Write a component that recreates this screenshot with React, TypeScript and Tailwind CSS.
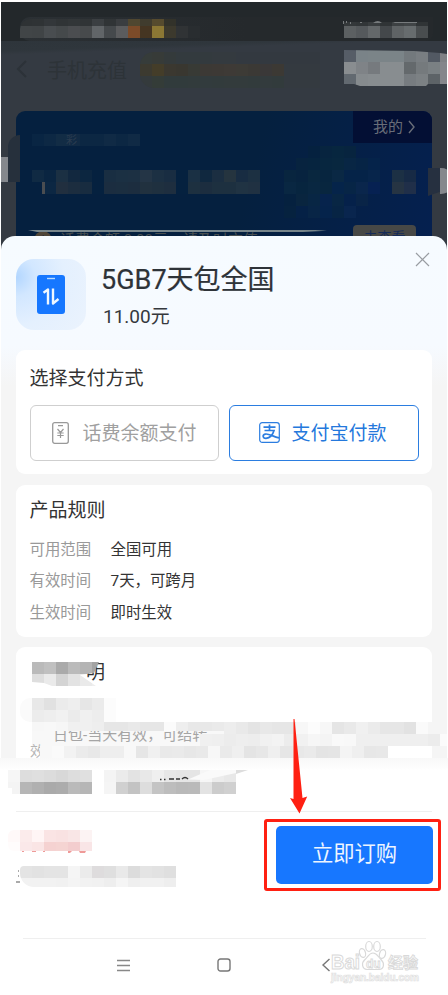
import React from "react";

type MosaicProps = { className?: string; rows: string[][] };

/** Grid of 12px privacy blocks. */
function Mosaic({ className = "", rows }: MosaicProps) {
  return (
    <div className={"flex shrink-0 flex-col overflow-hidden " + className} aria-hidden="true">
      {rows.map((row, i) => (
        <div key={i} className="flex shrink-0">
          {row.map((c, j) => (
            <span key={j} className="h-3 w-3 shrink-0" style={{ backgroundColor: c ? "#" + c : "transparent" }} />
          ))}
        </div>
      ))}
    </div>
  );
}

const r = (s: string) => s.split(" ").map((c) => (c === "-" ? "" : c));

function StatusBar() {
  return (
    <div className="relative h-[39px] shrink-0 bg-[#23282b] pt-[15px]">
      <div className="ml-[19px] flex h-6 w-[413px] items-start justify-between rounded-bl-[10px] rounded-br-[8px] rounded-tl-[10px] bg-[linear-gradient(90deg,#2b3034_0%,#25292c_55%,#25292c_100%)] pr-[5px]">
        <Mosaic
          className="-mt-[3px] w-[180px] [clip-path:inset(5px_0_0_0_round_10px_0_0_0)]"
          rows={[
            r("2e3234 2f3335 33373a 303436 323638 303436 3b3f42 303436 3a3d40 504730 403c2e 564b2e 32322a - -"),
            r("414547 404446 494d50 45494b 4b4d50 474a4c 616568 45494c 5b5c5e 7c4b29 453522 8b7734 3c392d 303335 292d30"),
          ]}
        />
        <div className="-mt-[3px]">
          <Mosaic
            className="[clip-path:inset(8px_0_0_0)]"
            rows={[
              r("34383a 323638 393d3f 303436 3d4143 414547 303436"),
              r("5c6062 55595c 64686a 44484b 5f6365 676c6e 494d4f"),
            ]}
          />
        </div>
      </div>
      <svg className="absolute left-[339px] top-[18px]" width="80" height="5" viewBox="0 0 80 5" fill="#777b7d">
        <path d="M3 1h1v3H3zM6 1h1v2H6zM10 2h1v2h-1zM20 2h2v1h-2zM33 3q5-4 9 0zM55 2h22v1H53z" />
      </svg>
    </div>
  );
}

function TitleBar() {
  return (
    <div className="flex h-[70px] shrink-0 items-start bg-[linear-gradient(178deg,#2e353b_0px,#2f363c_10px,#343a42_14px)] pl-[15px]">
      <svg className="mt-[18px] shrink-0" width="12" height="20" viewBox="0 0 12 20" fill="none" stroke="#2c3238" strokeWidth="2">
        <path d="M10 2L2 10l8 8" />
      </svg>
      <span className="ml-[19px] mt-[15px] w-[93px] shrink-0 whitespace-nowrap text-[20px] leading-[30px] text-[#2d3338]">手机充值</span>
      <Mosaic
        className="mt-[11px] w-[180px] rounded-l-[14px]"
        rows={[
          r("363c3a 373b38 343a3b 333a3e 333a3e 333a3e 343a3f 343a3f 333940 333940 333940 333940 333940 333940 333940"),
          r("3c3a30 443d29 3b3830 393730 383a35 3c3935 3d3935 3e3a36 3d3b36 3b3935 3a3838 3c3934 343a40 343a40 343a40"),
          r("343a3c 343c38 313b3c 313b3c 323b3c 323b3d 323b3c 333b3c 333b3c 323b3c 333b3d 323b3c 343a40 343a40 343a40"),
        ]}
      />
      <Mosaic
        className="ml-[24px] mt-[9px] w-[103px] [clip-path:polygon(0_0,70px_1px,96px_3px,104px_4px,104px_34px,84px_34px,82px_36px,16px_36px,10px_34px,0_34px)]"
        rows={[
          r("565d67 7a8388 7b8488 7b8488 7b8488 73797d 797e82 525963 7f8185"),
          r("898d90 7f8387 767a7e 888d90 888d90 64696c 757a7d 7a8083 85868b"),
          r("626970 868b8e 888d90 888d90 888d90 777c80 7c8184 5d6367 85868b"),
        ]}
      />
    </div>
  );
}

function AccountCard() {
  return (
    <div className="relative mx-[15px] flex h-[160px] shrink-0 flex-col overflow-hidden rounded-t-[9px] bg-[linear-gradient(105deg,#05203f_55%,#052050_100%)]">
      <div className="flex h-[59px] items-start justify-between pl-4">
        <Mosaic
          className="mt-[23px]"
          rows={[r("092543 0d2844 122c45 112a44 0c2743 0c2743 102a45 0c2743 102a45")]}
        />
        <div className="flex h-8 w-[79px] items-center bg-[#030f34] pl-5 text-[15px] text-[#686d78]">
          <span className="pt-px">我的</span>
          <svg className="ml-1" width="9" height="14" viewBox="0 0 9 14" fill="none" stroke="#686d78" strokeWidth="1.4">
            <path d="M2 1l5 6-5 6" />
          </svg>
        </div>
      </div>
      <div className="flex h-[59px] items-start justify-between pl-4 pr-4">
        <Mosaic
          rows={[
            r("102a43 0a2541 1b3043 12283f 0c2640 05213f 192e42 1b3043 1c3043 243546 1c3043 192d42 05213f 1a3044 10283f 1b2e41 25343f 182c42 1c3042"),
            r("- 0c2743 212f3f 1c2d3f 182c40 05213f 1b2d40 1b2e40 1c2d3f 21313f 1f303f 1e2e3f 05213f 1d3040 1c2d3f 1d3040 1d3040 203343 203142"),
          ]}
        />
        <Mosaic rows={[r("1c3044 172a45"), r("263443 202f49")]} />
      </div>
      <div className="flex items-start justify-between pl-[18px] pr-4 text-[15px] leading-[22px] text-[#484f50]">
        <div className="flex items-center">
          <span className="mr-2 flex h-[18px] w-[18px] items-center justify-center rounded-full bg-[#504638] text-[12px] text-[#222e3c]">!</span>
          话费余额 0.00元，请及时充值
        </div>
        <div className="-mt-1 h-6 w-[63px] rounded-[4px] bg-[#474846] pt-px text-center text-[14px] text-[#152b58]">去查看</div>
      </div>
      <Mosaic
        className="absolute left-[268px] top-[35px]"
        rows={[
          r("- - 05213f 07243f 07263f 07243f - -"),
          r("- 07233f 06243f 07263f 08273f 082644 062445 05234a"),
          r("08253f 07233f 09273f 07253f 0a2844 052348 052348 07254b"),
          r("092742 07253f 092741 08263f 05244a 072546 0a264c 062152"),
          r("05213f 09253f 082644 06234c 082644 05214a 092447 -"),
          r("06223f 052146 082546 05234b 072444 09254e - -"),
        ]}
      />
      <span className="absolute left-[50px] top-[24px] text-[11px] leading-[12px] text-[#2b3c50]">彩</span>
      <div className="absolute left-[26px] top-[71px] h-3 w-[3px] bg-[#4a4d51]" />
    </div>
  );
}

function Backdrop() {
  return (
    <div className="relative ml-px mt-0.5 flex h-[260px] w-[446px] shrink-0 flex-col overflow-hidden bg-[#343a42]">
      <StatusBar />
      <TitleBar />
      <AccountCard />
      <div className="absolute left-[7px] top-[133px] h-[47px] w-3 rounded-tl-full bg-[#26303c]" />
      <div className="absolute left-0 top-[155px] h-[25px] w-[7px] bg-[#85888d]" />
      <div className="absolute left-[427px] top-[166px] h-[28px] w-3 bg-[#263040] [clip-path:polygon(0_0,100%_0,100%_85%,0_100%)]" />
      <div className="absolute left-[439px] top-[166px] h-[26px] w-[14px] rounded-r-full bg-[#85888d]" />
      <div className="absolute left-[27px] top-[228px] h-[2px] w-[299px] bg-[#77858a] [clip-path:polygon(0_0,96%_0,100%_40%,92%_100%,3%_100%)]" />
    </div>
  );
}

function PlanHeader() {
  return (
    <div className="flex h-[114px] shrink-0 items-start pl-[15px] pr-[17px] pt-[23px]">
      <div className="flex h-[71px] w-[70px] items-center justify-center rounded-[18px] bg-[radial-gradient(circle_at_0%_25%,#b2d6ff_0%,#d2e7ff_22%,#e4f0fe_55%,#ebf3fd_100%)]">
        <svg width="28" height="39" viewBox="0 0 28 39">
          <rect width="28" height="39" rx="3" fill="#1677ff" />
          <path d="M10 3.500h8" stroke="#b9dbff" strokeWidth="1.400" />
          <path d="M6.500 17.800l4.500-3.300v15M16 13.500v15l5.500-4.500" fill="none" stroke="#eef7ff" strokeWidth="2.400" strokeLinejoin="round" />
        </svg>
      </div>
      <div className="flex flex-1 flex-col pl-[15px]">
        <h1 className="h-10 whitespace-nowrap pt-px text-[27px] leading-[40px] text-[#2e3338] [-webkit-text-stroke:0.2px_#2e3338]">5GB7天包全国</h1>
        <p className="pl-[2px] text-[19px] leading-[35px] text-[#34383d]">11.00元</p>
      </div>
      <svg className="-mt-[7px]" width="15" height="15" viewBox="0 0 15 15" stroke="#999da2" strokeWidth="1.2">
        <path d="M1 1l13 13M14 1L1 14" />
      </svg>
    </div>
  );
}

function PaymentCard() {
  return (
    <section className="h-[124px] shrink-0 rounded-[9px] bg-white px-[13.500px] pt-[15px]">
      <h2 className="text-[19px] leading-[28px] text-[#333]">选择支付方式</h2>
      <div className="mt-[11.500px] flex gap-[10px]">
        <button className="flex h-[56px] w-[190px] items-center rounded-[6px] border border-[#cfcfcf] pl-[21px] text-[19px] text-[#a0a0a0]">
          <svg className="mr-[14px] shrink-0" width="17" height="22" viewBox="0 0 17 22" fill="none" stroke="#999" strokeWidth="1.3">
            <rect x="0.700" y="0.700" width="15.600" height="20.600" rx="2" />
            <path d="M6 3.700h5M5.500 7l3 3.500 3-3.500M8.500 10.500V16M5.300 11h6.400M5.300 13.500h6.400" strokeWidth="1.200" />
          </svg>
          <span className="pt-1">话费余额支付</span>
        </button>
        <button className="flex h-[56px] w-[190px] items-center rounded-[6px] border border-[#2b7de0] pl-[29.500px] text-[19px] text-[#2478dc]">
          <svg className="mr-[11px] shrink-0" width="21" height="21" viewBox="0 0 21 21" fill="none" stroke="#2b7de0" strokeWidth="1.200">
            <rect x="0.700" y="0.700" width="19.600" height="19.600" rx="2.500" />
            <path d="M4.500 5.200h12M10.500 2.500v6M5.500 8.500h9.500c-1.200 4.200-3.500 7.500-8 7.800-3.500.1-3.800-3.500-.8-4.200 3.500-.8 7.500 2.400 13.800 3.800" strokeWidth="1.700" />
          </svg>
          <span className="pt-1">支付宝付款</span>
        </button>
      </div>
    </section>
  );
}

const rules = [
  ["可用范围", "全国可用"],
  ["有效时间", "7天，可跨月"],
  ["生效时间", "即时生效"],
];

function RulesCard() {
  return (
    <section className="h-[152px] shrink-0 rounded-[9px] bg-white px-[13.500px] pt-[12.500px]">
      <h2 className="text-[19px] leading-[28px] text-[#333]">产品规则</h2>
      <dl className="mt-[9.500px] flex flex-col">
        {rules.map(([k, v]) => (
          <div key={k} className="flex h-[31.700px] items-center text-[15.400px]">
            <dt className="w-[81px] text-[#999]">{k}</dt>
            <dd className="text-[#333]">{v}</dd>
          </div>
        ))}
      </dl>
    </section>
  );
}

function DescriptionCard() {
  return (
    <section className="flex h-[117px] shrink-0 flex-col rounded-t-[9px] bg-white pt-[15px]">
      <div className="flex h-9 items-start pl-4">
        <Mosaic
          className="relative z-10 w-[72px] [clip-path:polygon(0_0,67px_0,62px_11px,48px_13px,64px_24px,20px_24px,12px_21px,0_20px)]"
          rows={[r("bababa c0c0c0 aaaaaa bbbbbb b4b4b4 a3a3a3"), r("dedede eaeaea d4d4d4 e3e3e3 eaeaea eeeeee")]}
        />
        <h2 className="-ml-[18px] text-[19px] leading-[22px] text-[#333]">明</h2>
      </div>
      <Mosaic
        className="ml-1 w-24 rounded-l-[10px]"
        rows={[
          r("fbfbfb e8e8e8 e1e1e1 ebebeb eeeeee e6e6e6 ebebeb fcfcfc"),
          r("fafafa ececec eeeeee f1f1f1 ebebeb f0f0f0 ededed fcfcfc"),
        ]}
      />
      <div className="flex h-[9px] items-start pl-4">
        <Mosaic
          className="relative z-10 h-[9px] w-[192px]"
          rows={[r("f7f7f7 f8f8f8 f6f6f6 f0f0f0 f0f0f0 eeeeee e6e6e6 e6e6e6 e9e9e9 e6e6e6 e6e6e6 fbfbfb eeeeee e8e8e8 e8e8e8 eaeaea")]}
        />
        <Mosaic
          className="relative z-10"
          rows={[r("ededed e9e9e9 e4e4e4 e8e8e8 e6e6e6 e6e6e6 f7f7f7 fcfcfc f7f7f7 e5e5e5 e9e9e9 f0f0f0 ebebeb e6e6e6 e6e6e6 e2e2e2 fafafa f5f5f5")]}
        />
      </div>
      <div className="flex h-[15px] items-start bg-[linear-gradient(90deg,#ffffff_16px,#f8f8f8_16px)] pl-[37px]">
        <p className="-mt-[6px] w-[147px] whitespace-nowrap text-[15px] leading-[20px] text-[#a5a5a5]">日包-当天有效，可结转</p>
        <Mosaic
          className="relative z-10 mt-[3px]"
          rows={[r("f0f0f0 efefef ececec eeeeee ededed f1f1f1 f3f3f3 ececec f1f1f1 f6f6f6 f4f4f4 f9f9f9 f8f8f8 efefef efefef efefef efefef efefef efefef ececec fbfbfb")]}
        />
      </div>
      <div className="flex h-3 items-start pl-[14px]">
        <span className="-mt-[3px] w-[14px] shrink-0 text-[14px] leading-[16px] text-[#b5b5b5]">效</span>
        <Mosaic
          className="-ml-1 w-[348px]"
          rows={[r("f8f8f8 fafafa f2f2f2 ebebeb e8e8e8 eeeeee eeeeee f8f8f8 e6e6e6 f0f0f0 e9e9e9 eaeaea e7e7e7 e9e9e9 f7f7f7 eaeaea efefef e4e4e4 e7e7e7 efefef e6e6e6 e8e8e8 eaeaea e4e4e4 e5e5e5 f4f4f4 efefef e7e7e7 e8e8e8 e7e7e7")]}
        />
      </div>
    </section>
  );
}

function Summary() {
  return (
    <div className="relative flex h-9 shrink-0 items-start gap-3 bg-[linear-gradient(#f8f8f8_0px,#fcfcfc_8px,#ffffff_12px)] pl-2 pt-3">
      <Mosaic
        className="[clip-path:polygon(0_0,100%_0,100%_100%,4px_100%,4px_18px,0_18px)]"
        rows={[r("f6f6f6 dddddd dfdfdf dcdcdc d8d8d8 dddddd e0e0e0"), r("f4f4f4 b6b6b6 b0b0b0 aaaaaa acacac bababa b6b6b6")]}
      />
      <Mosaic
        className="[clip-path:polygon(0_0,100%_0,100%_0,132px_4px,132px_24px,0_24px)]"
        rows={[
          r("f4f4f4 ebebeb e3e3e3 e8e8e8 efefef e7e7e7 e5e5e5 e5e5e5 f6f6f6 ececec e8e8e8 dddddd"),
          r("f5f5f5 d0d0d0 c3c3c3 dddddd c4c4c4 bdbdbd b9b9b9 bababa e3e3e3 cccccc d0d0d0 bbbbbb"),
        ]}
      />
      <svg className="absolute left-[158px] top-[12px]" width="80" height="14" viewBox="0 0 80 14">
        <path d="M30 9.500L52 0h26v3L46 10z" fill="#fafafa" />
        <path d="M2 9.500h1.500M6 9.500h1.500M11 9h5M18 9h4M24 9q3-3 6 0" fill="none" stroke="#333" strokeWidth="1.300" />
      </svg>
    </div>
  );
}

function OrderBar() {
  return (
    <div className="flex h-[79px] shrink-0 items-start justify-between pl-2 pr-[7px]">
      <div className="flex flex-col pt-[18px]">
        <Mosaic
          className="h-[21px] w-[84px] rounded-l-[6px]"
          rows={[r("fff9f9 fbebeb fff5f5 fae4e4 f9e2e2 f9e6e6 fcf3f3"), r("fffcfc fae8e9 fae5e5 f5d2d1 f5d4d2 f3cdce f9e5e6")]}
        />
        <svg className="ml-3" width="72" height="3" viewBox="0 0 72 3" fill="#ef9a98">
          <path d="M2 0h2v1H2zM12 0h4v1h-4zM23 0h2v1h-2zM48 0h4l-2 2h-2zM59 0h7l-1 2h-5z" />
        </svg>
        <div className="mt-3 flex items-start pl-2">
          <svg className="mt-1 shrink-0" width="4" height="14" viewBox="0 0 4 14" fill="#aaa">
            <path d="M2 0h1v2H2zM2 5h1v2H2zM0 11h4v2H0z" />
          </svg>
          <Mosaic
            className="h-[21px] w-[156px] rounded-bl-[14px] rounded-tl-[4px]"
            rows={[
              r("e4e4e4 e2e2e2 e4e4e4 e4e4e4 f5f5f5 ebebeb dedcdd dfdfdf e9e9e9 dcdcdc e4e4e4 e2e2e2 dfdfdf"),
              r("f2f2f2 f2f2f2 f2f2f2 f1f1f1 f4f4f4 f2f2f2 f1f1f1 eeeeee f5f5f5 efefef f1f1f1 f1f1f1 eeeeee"),
            ]}
          />
        </div>
      </div>
      <div className="mt-[7px] h-[72px] w-[177px] rounded-[3px] border-[3px] border-[#ff2012] pl-[9px] pt-[3.500px]">
        <button className="h-[58px] w-[157px] rounded-[5px] bg-[#1777ff] pb-[2px] text-[21.300px] text-[#edf5ff]">立即订购</button>
      </div>
    </div>
  );
}

function NavigationBar() {
  return (
    <nav className="flex h-[52px] shrink-0 items-center pl-[117px]">
      <svg width="13" height="13" viewBox="0 0 13 13" stroke="#888" strokeWidth="1.500">
        <path d="M0 1.500h13M0 6.500h13M0 11.500h13" />
      </svg>
      <svg className="ml-[87px]" width="14" height="14" viewBox="0 0 14 14" fill="none" stroke="#777" strokeWidth="1.400">
        <rect x="1" y="1" width="12" height="12" rx="2.500" />
      </svg>
      <svg className="ml-[90px]" width="10" height="14" viewBox="0 0 10 14" fill="none" stroke="#777" strokeWidth="1.400">
        <path d="M8.500 1L2 7l6.500 6" />
      </svg>
    </nav>
  );
}

function Watermark() {
  return (
    <svg
      className="absolute left-[328px] top-[938px]"
      width="96"
      height="48"
      viewBox="0 0 96 48"
      fill="#fff"
      stroke="#d9d9d9"
      fontFamily='"Liberation Sans", "Noto Sans CJK SC", sans-serif'
      fontWeight="bold"
    >
      <text x="3" y="31" fontSize="20" textLength="29" lengthAdjust="spacingAndGlyphs" strokeWidth="1">Bai</text>
      <g strokeWidth="1.200">
        <ellipse cx="34.500" cy="15" rx="3" ry="4.500" transform="rotate(-15 34.500 15)" />
        <ellipse cx="41" cy="8.500" rx="3.300" ry="5" />
        <ellipse cx="49" cy="8.500" rx="3.300" ry="5" />
        <ellipse cx="54.500" cy="16" rx="3" ry="4.500" transform="rotate(15 54.500 16)" />
        <path d="M45 15c-4 0-5 4-8 6.500-4 3.500-3 9.500 2 10h12c5-.5 6-6 2-10-3-3-4-6.500-8-6.500z" />
      </g>
      <text x="38" y="30" fontSize="12" strokeWidth="0.800">du</text>
      <text x="60" y="30" fontSize="15" strokeWidth="0.900">经验</text>
      <text x="3" y="43" fontSize="10" textLength="88" lengthAdjust="spacingAndGlyphs" stroke="#e0e0e0" strokeWidth="0.700">jingyan.baidu.com</text>
    </svg>
  );
}

export default function App() {
  return (
    <main className='relative flex h-[995px] w-[448px] flex-col overflow-hidden bg-white font-[Roboto,"Noto_Sans_CJK_SC",sans-serif]'>
      <Backdrop />
      <div className="relative -mt-[26px] ml-px flex h-[522px] w-[446px] shrink-0 flex-col overflow-hidden rounded-t-[14px] bg-[linear-gradient(#f6fbff_0px,#f6faff_110px,#f5f5f5_150px)]">
        <PlanHeader />
        <div className="flex flex-col gap-[10.500px] px-[15px]">
          <PaymentCard />
          <RulesCard />
          <DescriptionCard />
        </div>
      </div>
      <Summary />
      <div className="mx-4 mt-[17px] h-px shrink-0 bg-[#efefef]" />
      <OrderBar />
      <div className="ml-[23px] mt-[47px] h-px w-[403px] shrink-0 bg-[#efefef]" />
      <NavigationBar />
      <svg className="absolute left-[288px] top-[718px] z-20" width="22" height="97" viewBox="0 0 22 97" fill="#ff2012">
        <path d="M5.500 1h1L14.500 80l4.700-1.500L11.500 95.500 2 80l3.500 1z" />
      </svg>
      <Watermark />
    </main>
  );
}
